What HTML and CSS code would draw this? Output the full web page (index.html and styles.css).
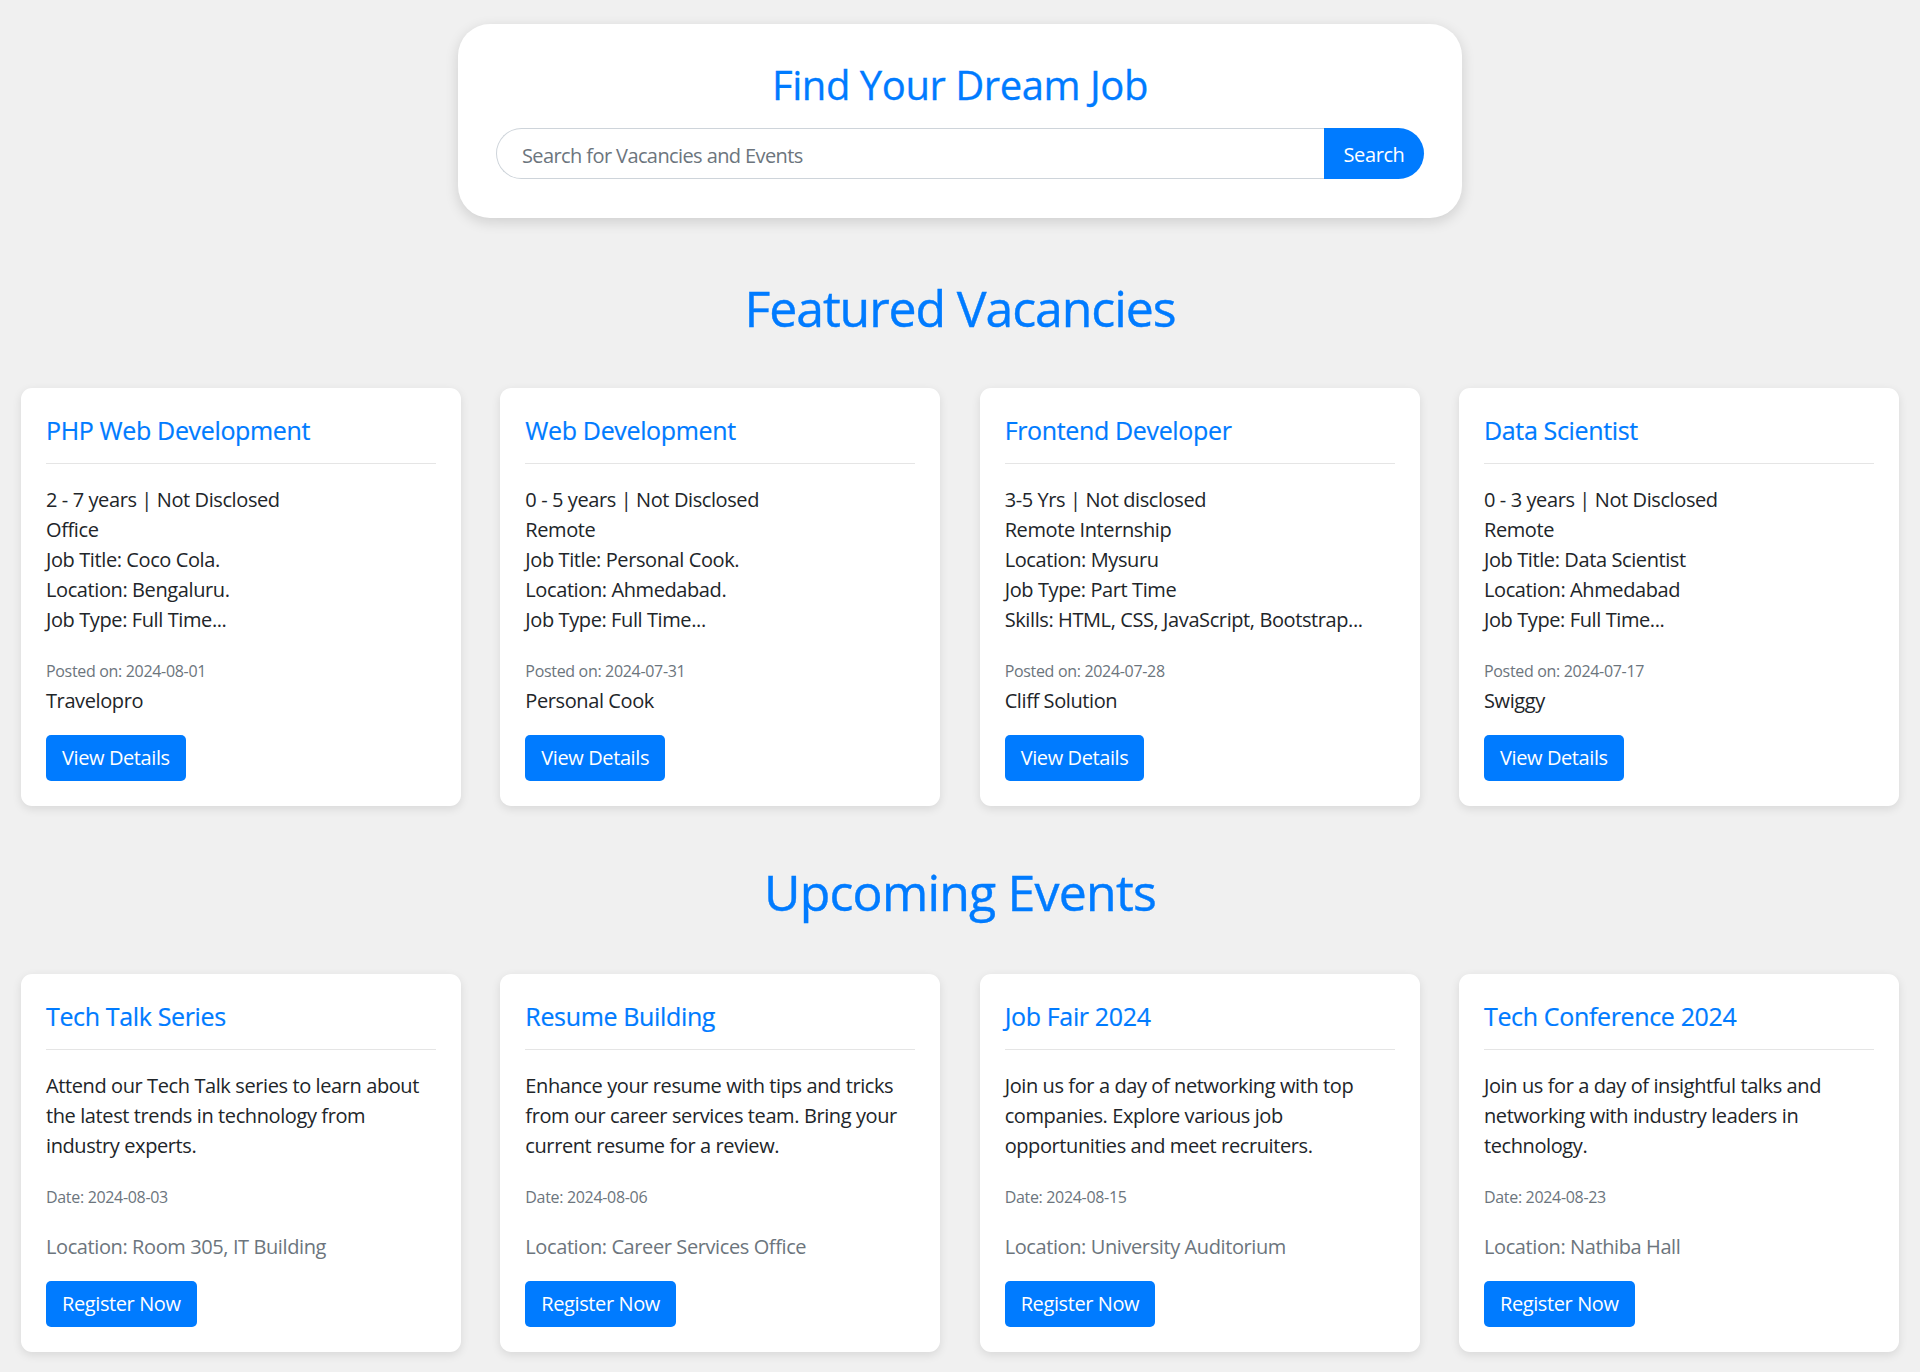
FILE: index.html
```html
<!DOCTYPE html>
<html lang="en">
<head>
<meta charset="UTF-8">
<title>Find Your Dream Job</title>
<link rel="stylesheet" href="styles.css">
</head>
<body>
  <header class="hero">
    <h2 class="hero-title">Find Your Dream Job</h2>
    <form class="search-group" onsubmit="return false">
      <input class="search-input" type="text" placeholder="Search for Vacancies and Events">
      <button class="search-btn" type="submit">Search</button>
    </form>
  </header>

  <section class="section">
    <h1 class="section-title">Featured Vacancies</h1>
    <div class="cards">
      <div class="card">
        <h5 class="card-title">PHP Web Development</h5>
        <hr class="card-rule">
        <p class="card-text">2 - 7 years | Not Disclosed<br>Office<br>Job Title: Coco Cola.<br>Location: Bengaluru.<br>Job Type: Full Time...</p>
        <p class="card-meta"><small class="muted">Posted on: 2024-08-01</small></p>
        <p class="card-company">Travelopro</p>
        <a class="btn" href="#">View Details</a>
      </div>
      <div class="card">
        <h5 class="card-title">Web Development</h5>
        <hr class="card-rule">
        <p class="card-text">0 - 5 years | Not Disclosed<br>Remote<br>Job Title: Personal Cook.<br>Location: Ahmedabad.<br>Job Type: Full Time...</p>
        <p class="card-meta"><small class="muted">Posted on: 2024-07-31</small></p>
        <p class="card-company">Personal Cook</p>
        <a class="btn" href="#">View Details</a>
      </div>
      <div class="card">
        <h5 class="card-title">Frontend Developer</h5>
        <hr class="card-rule">
        <p class="card-text">3-5 Yrs | Not disclosed<br>Remote Internship<br>Location: Mysuru<br>Job Type: Part Time<br>Skills: HTML, CSS, JavaScript, Bootstrap...</p>
        <p class="card-meta"><small class="muted">Posted on: 2024-07-28</small></p>
        <p class="card-company">Cliff Solution</p>
        <a class="btn" href="#">View Details</a>
      </div>
      <div class="card">
        <h5 class="card-title">Data Scientist</h5>
        <hr class="card-rule">
        <p class="card-text">0 - 3 years | Not Disclosed<br>Remote<br>Job Title: Data Scientist<br>Location: Ahmedabad<br>Job Type: Full Time...</p>
        <p class="card-meta"><small class="muted">Posted on: 2024-07-17</small></p>
        <p class="card-company">Swiggy</p>
        <a class="btn" href="#">View Details</a>
      </div>
    </div>
  </section>

  <section class="section section-events">
    <h1 class="section-title">Upcoming Events</h1>
    <div class="cards">
      <div class="card">
        <h5 class="card-title">Tech Talk Series</h5>
        <hr class="card-rule">
        <p class="card-text">Attend our Tech Talk series to learn about the latest trends in technology from industry experts.</p>
        <p class="card-meta"><small class="muted">Date: 2024-08-03</small></p>
        <p class="card-location">Location: Room 305, IT Building</p>
        <a class="btn" href="#">Register Now</a>
      </div>
      <div class="card">
        <h5 class="card-title">Resume Building</h5>
        <hr class="card-rule">
        <p class="card-text">Enhance your resume with tips and tricks from our career services team. Bring your current resume for a review.</p>
        <p class="card-meta"><small class="muted">Date: 2024-08-06</small></p>
        <p class="card-location">Location: Career Services Office</p>
        <a class="btn" href="#">Register Now</a>
      </div>
      <div class="card">
        <h5 class="card-title">Job Fair 2024</h5>
        <hr class="card-rule">
        <p class="card-text">Join us for a day of networking with top companies. Explore various job opportunities and meet recruiters.</p>
        <p class="card-meta"><small class="muted">Date: 2024-08-15</small></p>
        <p class="card-location">Location: University Auditorium</p>
        <a class="btn" href="#">Register Now</a>
      </div>
      <div class="card">
        <h5 class="card-title">Tech Conference 2024</h5>
        <hr class="card-rule">
        <p class="card-text">Join us for a day of insightful talks and networking with industry leaders in technology.</p>
        <p class="card-meta"><small class="muted">Date: 2024-08-23</small></p>
        <p class="card-location">Location: Nathiba Hall</p>
        <a class="btn" href="#">Register Now</a>
      </div>
    </div>
  </section>
</body>
</html>
```
FILE: styles.css
```css
* {
  box-sizing: border-box;
}

html, body {
  margin: 0;
  padding: 0;
}

body {
  background: #f0f0f0;
  font-family: "Open Sans", "Noto Sans", "Liberation Sans", sans-serif;
  font-size: 20px;
  line-height: 30px;
  letter-spacing: -0.4px;
  color: #212529;
  padding-bottom: 20px;
}

/* Hero search box */
.hero {
  width: 1004px;
  margin: 23.5px auto 0;
  padding: 37.5px 38px 39px;
  background: #ffffff;
  border-radius: 32px;
  box-shadow: 0 4px 14px rgba(0, 0, 0, 0.14);
}

.hero-title {
  margin: 0 0 18.5px;
  text-align: center;
  font-size: 40px;
  line-height: 48px;
  font-weight: 500;
  letter-spacing: -0.45px;
  color: #007bff;
  -webkit-text-stroke: 0.3px #007bff;
}

.search-group {
  display: flex;
  height: 51px;
  margin: 0;
}

.search-input {
  flex: 1;
  min-width: 0;
  height: 51px;
  border: 1px solid #ced4da;
  border-right: none;
  border-radius: 25.5px 0 0 25.5px;
  padding: 4px 25px 0;
  font-family: inherit;
  font-size: 20px;
  letter-spacing: -0.6px;
  color: #495057;
  background: #fff;
  outline: none;
}

.search-input::placeholder {
  color: #6c757d;
  opacity: 1;
}

.search-btn {
  width: 100px;
  height: 51px;
  border: none;
  border-radius: 0 25.5px 25.5px 0;
  background: #007bff;
  color: #ffffff;
  font-family: inherit;
  font-size: 20px;
  letter-spacing: -0.4px;
  padding: 3px 0 0;
  cursor: pointer;
}

/* Sections */
.section-title {
  margin: 60px 0 50.7px;
  text-align: center;
  font-size: 50px;
  line-height: 60px;
  font-weight: 500;
  letter-spacing: -1.1px;
  color: #007bff;
  -webkit-text-stroke: 0.4px #007bff;
}

.section-events .section-title {
  margin-top: 55.6px;
  margin-bottom: 51.7px;
  letter-spacing: -0.8px;
}

.cards {
  display: grid;
  grid-template-columns: repeat(4, 1fr);
  column-gap: 39.33px;
  padding: 0 21px;
}

.card {
  background: #ffffff;
  border-radius: 11px;
  padding: 27px 25px 25px;
  box-shadow: 0 3px 10px rgba(0, 0, 0, 0.1);
  display: flex;
  flex-direction: column;
  align-items: flex-start;
}

.card-title {
  margin: 0;
  font-size: 25px;
  line-height: 30px;
  font-weight: 500;
  letter-spacing: -0.35px;
  color: #007bff;
  -webkit-text-stroke: 0.2px #007bff;
}

.card-rule {
  align-self: stretch;
  margin: 18.3px 0 21px;
  border: 0;
  border-top: 1px solid rgba(0, 0, 0, 0.1);
}

.card-text {
  margin: 0 0 20px;
}

.card-meta {
  margin: 0;
}

.muted {
  font-size: 16px;
  letter-spacing: -0.32px;
  color: #6c757d;
}

.card-company {
  margin: 0 0 19px;
}

.section-events .card-meta {
  margin-bottom: 20px;
}

.section-events .card-location {
  margin: 0 0 19px;
  color: #6c757d;
}

.btn {
  display: inline-block;
  padding: 8px 16px;
  background: #007bff;
  color: #ffffff;
  text-decoration: none;
  border-radius: 5px;
  font-size: 20px;
  line-height: 30px;
}
```
